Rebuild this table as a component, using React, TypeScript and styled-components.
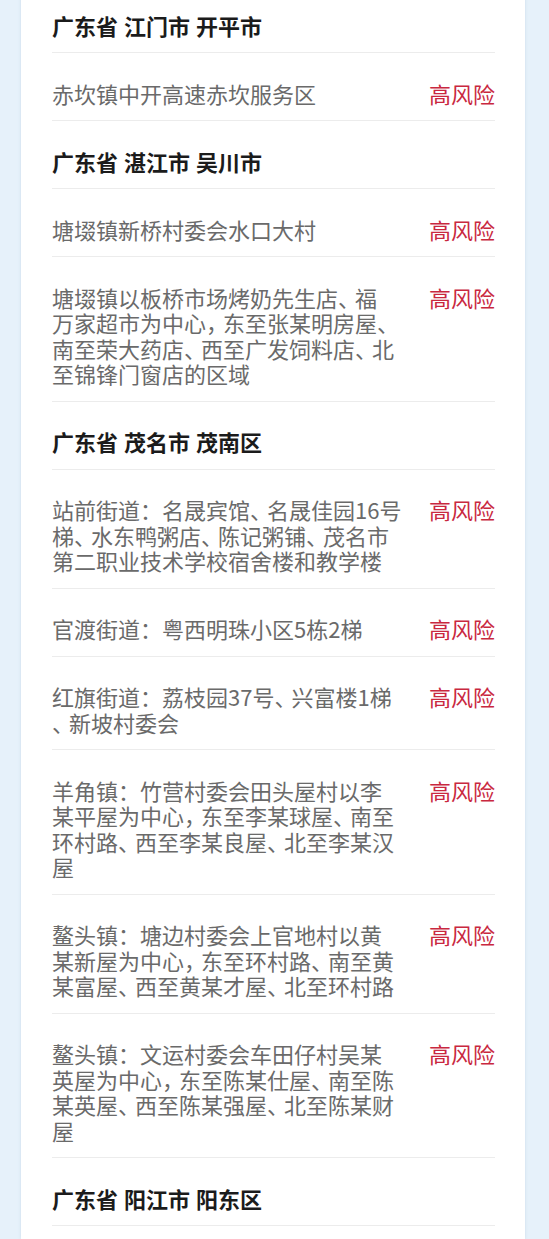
import React from 'react';
import styled, { createGlobalStyle } from 'styled-components';

const GlobalStyle = createGlobalStyle`
    html, body {
        margin: 0;
        padding: 0;
        background: #e6f1fa;
    }
    body {
        font-family: "Noto Sans CJK SC", "Noto Sans", sans-serif;
        -webkit-font-smoothing: antialiased;
    }
`;

const Page = styled.div`
    display: flex;
    min-height: 1239px;
    padding: 0 24px 0 21px;
    overflow: hidden;
`;

const Card = styled.div`
    flex: 1;
    margin-top: -15px;
    padding: 0 30px 0 31px;
    background: #fff;
    box-shadow: 0 0 3px rgba(170, 195, 215, 0.45);
`;

const Item = styled.div`
    display: flex;
    align-items: flex-start;
    justify-content: space-between;
    padding: 27.5px 0 14px;
    border-bottom: 1px solid #ececec;
    font-size: 22px;
    line-height: 25.5px;
`;

const AreaTitle = styled.div`
    font-weight: 700;
    color: #1b1b1b;
    word-spacing: 1px;
`;

const Place = styled.div`
    flex: 1;
    color: #6a6a6a;
    white-space: pre-line;
`;

// list punctuation is a bit narrower than a full em in the source font
const Punct = styled.span`
    display: inline-block;
    height: 25.5px;
    margin-right: 6px;
    font-feature-settings: 'halt';
`;

const Risk = styled.div`
    flex-shrink: 0;
    margin-left: 16px;
    color: #c9283f;
`;

type Area = {
    title: string;
    places: string[];
};

const areas: Area[] = [
    {
        title: '广东省 江门市 开平市',
        places: ['赤坎镇中开高速赤坎服务区'],
    },
    {
        title: '广东省 湛江市 吴川市',
        places: [
            '塘㙍镇新桥村委会水口大村',
            '塘㙍镇以板桥市场烤奶先生店、福\n万家超市为中心，东至张某明房屋、\n南至荣大药店、西至广发饲料店、北\n至锦锋门窗店的区域',
        ],
    },
    {
        title: '广东省 茂名市 茂南区',
        places: [
            '站前街道：名晟宾馆、名晟佳园16号\n梯、水东鸭粥店、陈记粥铺、茂名市\n第二职业技术学校宿舍楼和教学楼',
            '官渡街道：粤西明珠小区5栋2梯',
            '红旗街道：荔枝园37号、兴富楼1梯\n、新坡村委会',
            '羊角镇：竹营村委会田头屋村以李\n某平屋为中心，东至李某球屋、南至\n环村路、西至李某良屋、北至李某汉\n屋',
            '鳌头镇：塘边村委会上官地村以黄\n某新屋为中心，东至环村路、南至黄\n某富屋、西至黄某才屋、北至环村路',
            '鳌头镇：文运村委会车田仔村吴某\n英屋为中心，东至陈某仕屋、南至陈\n某英屋、西至陈某强屋、北至陈某财\n屋',
        ],
    },
    {
        title: '广东省 阳江市 阳东区',
        places: [],
    },
];

const renderPlace = (text: string) =>
    text.split(/([、，])/).map((part, i) =>
        part === '、' || part === '，' ? <Punct key={i}>{part}</Punct> : part,
    );

const App = () => (
    <>
        <GlobalStyle />
        <Page>
            <Card>
                {areas.map(area => (
                    <React.Fragment key={area.title}>
                        <Item>
                            <AreaTitle>{area.title}</AreaTitle>
                        </Item>
                        {area.places.map(place => (
                            <Item key={place}>
                                <Place>{renderPlace(place)}</Place>
                                <Risk>高风险</Risk>
                            </Item>
                        ))}
                    </React.Fragment>
                ))}
            </Card>
        </Page>
    </>
);

export default App;
